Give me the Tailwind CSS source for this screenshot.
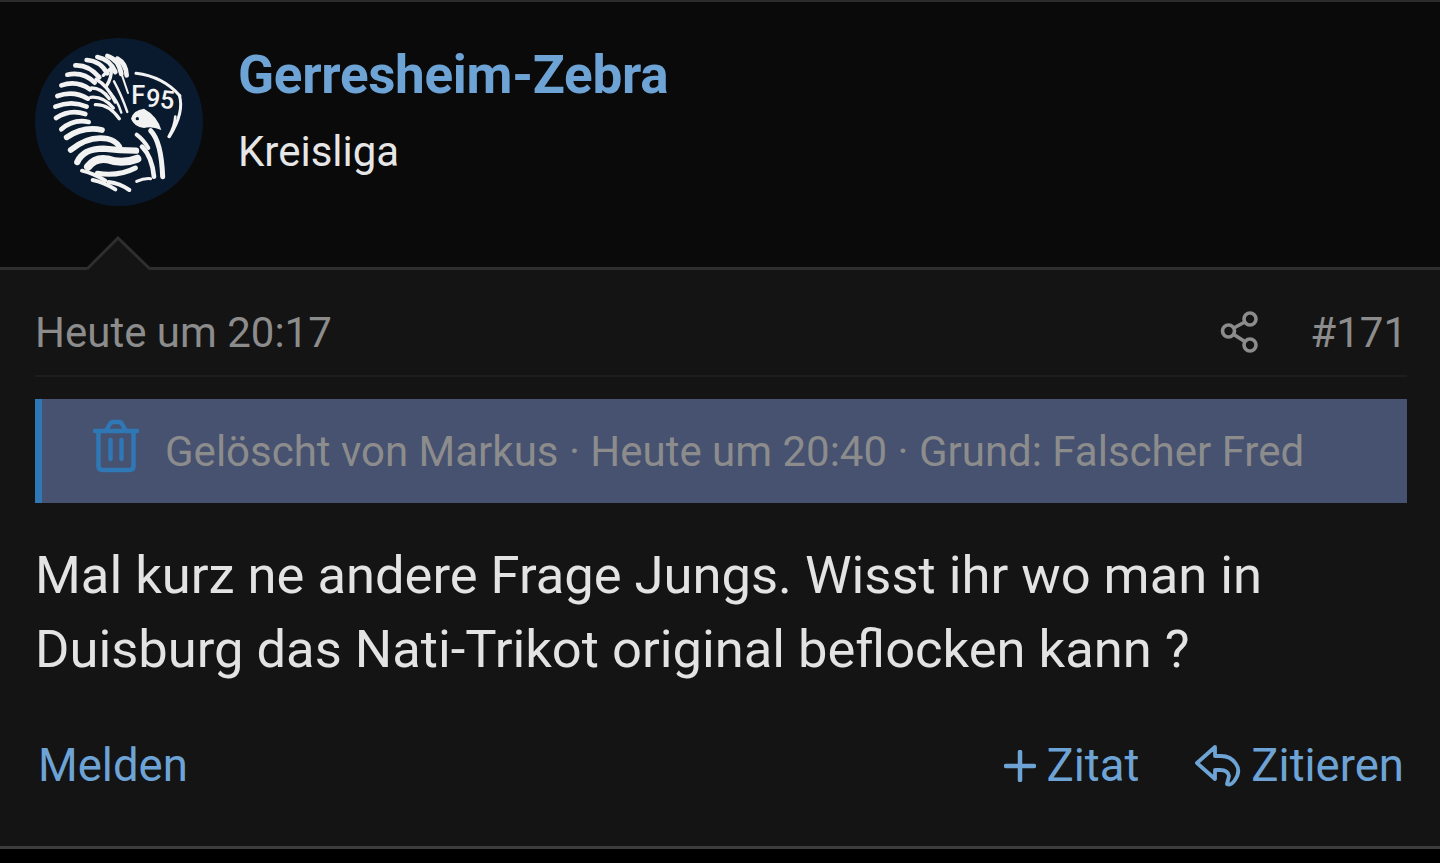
<!DOCTYPE html>
<html lang="de">
<head>
  <meta charset="UTF-8" />
  <title>Gerresheim-Zebra</title>
  <script src="https://cdn.jsdelivr.net/npm/@tailwindcss/browser@4"></script>
</head>
<body class="bg-black font-['Roboto',sans-serif] overflow-hidden">
  <div class="w-[1440px] h-[863px] flex flex-col">
    <!-- author header -->
    <header class="relative h-[270px] bg-[#0a0a0a] border-t-[2px] border-t-[#2c2c2c] border-b-[3px] border-b-[#2e2e2e] flex pl-[35px] pt-[36px] gap-[35px] shrink-0">
      <svg class="w-[168px] h-[168px] shrink-0" viewBox="45 40 504 504">
        <defs><filter id="soft"><feGaussianBlur stdDeviation="2" /></filter></defs>
        <circle cx="297" cy="292" r="252" fill="#0a1a2e" />
        <g fill="none" stroke="#f2f2f2" stroke-linecap="round" filter="url(#soft)">
          <!-- mane -->
          <g stroke-width="14">
            <path d="M200 106Q240 108 262 146" />
            <path d="M232 97Q270 104 286 142" />
            <path d="M262 94Q296 104 304 148" />
            <path d="M292 102Q318 116 320 152" />
            <path d="M166 122Q206 120 238 158" />
            <path d="M142 150Q190 140 224 174" />
            <path d="M124 182Q170 166 210 194" />
            <path d="M112 214Q160 196 204 222" />
            <path d="M106 246Q155 226 200 246" />
            <path d="M108 280Q150 252 196 268" />
            <path d="M124 314Q160 282 206 292" />
          </g>
          <!-- head -->
          <g stroke-width="10">
            <path d="M250 152Q262 140 274 130Q276 160 258 186" />
            <path d="M214 190Q245 190 268 222" />
            <path d="M228 164Q262 182 286 232" />
            <path d="M282 170Q304 210 322 262" stroke-width="7" />
            <path d="M270 204Q292 226 304 264" stroke-width="7" />
            <path d="M226 240Q266 238 298 282" />
            <path d="M212 218Q250 214 280 250" />
            <path d="M302 140L324 205" stroke-width="6" />
          </g>
          <!-- chest and bicep -->
          <g stroke-width="17">
            <path d="M140 338Q190 304 246 316" />
            <path d="M152 376Q205 332 262 342Q288 348 298 366" />
            <path d="M172 412Q190 372 250 372Q300 378 348 378" stroke-width="19" />
            <path d="M204 426Q226 398 262 404Q306 420 352 402" stroke-width="24" />
            <path d="M232 446Q296 456 346 430" stroke-width="15" />
          </g>
          <g stroke-width="12">
            <path d="M186 438Q220 446 256 468" />
            <path d="M218 466Q250 472 286 494" />
            <path d="M266 472Q300 476 328 496" />
            <path d="M392 318Q424 350 428 456" stroke-width="15" />
            <path d="M366 366Q396 396 402 456" stroke-width="14" />
            <path d="M350 330Q370 345 385 370" stroke-width="12" />
            <path d="M350 470Q372 460 392 462" stroke-width="9" />
            <!-- shield edge -->
            <path d="M348 146Q430 156 480 214" stroke-width="9" />
            <path d="M478 212Q494 262 448 336" stroke-width="9" />
            <path d="M466 276Q464 306 446 336" stroke-width="8" />
          </g>
        </g>
        <!-- fist -->
        <path d="M333 282Q340 256 372 252Q412 274 424 316Q395 304 372 310Q342 306 333 282Z" fill="#f2f2f2" filter="url(#soft)" />
        <circle cx="352" cy="282" r="5" fill="#0a1a2e" />
        <text x="334" y="238" fill="#f2f2f2" font-family="Roboto, sans-serif" font-weight="500" font-size="76">F</text>
        <text transform="rotate(6 375 245)" x="375" y="245" fill="#f2f2f2" font-family="Roboto, sans-serif" font-weight="500" font-size="76">95</text>
      </svg>
      <div class="flex flex-col pt-[7px]">
        <h1 class="text-[53px] leading-[60px] font-bold text-[#6ea3d6] tracking-[-0.3px]">Gerresheim-Zebra</h1>
        <p class="mt-[23px] text-[42px] leading-[48px] text-[#e6e6e6]">Kreisliga</p>
      </div>
      <!-- arrow -->
      <svg class="absolute left-[86px] top-[234px] w-[66px] h-[36px]" viewBox="0 0 66 36">
        <path d="M0 35L32 2L65 35Z" fill="#141414" />
        <path d="M1 33L32 2L64 33" fill="none" stroke="#2e2e2e" stroke-width="3" />
      </svg>
    </header>

    <!-- post -->
    <article class="h-[579px] bg-[#141414] border-b-[3px] border-b-[#3c3c3c] pl-[35px] pr-[33px] flex flex-col shrink-0">
      <div class="h-[107px] border-b-[2px] border-b-[#1e1e1e] flex items-center justify-between pt-[20px] text-[#8c8c8c] text-[42px]">
        <span>Heute um 20:17</span>
        <div class="flex items-center gap-[51px]">
          <svg class="w-[40px] h-[42px] mb-[2px]" viewBox="0 0 40 42" fill="none" stroke="#8c8c8c" stroke-width="3.600">
            <circle cx="31" cy="8" r="6" />
            <circle cx="9.500" cy="20" r="6" />
            <circle cx="31" cy="34" r="6" />
            <path d="M14.800 17L25.800 11M14.800 23.500L25.800 30.500" />
          </svg>
          <span>#171</span>
        </div>
      </div>

      <div class="mt-[22px] h-[104px] bg-[#475270] border-l-[7px] border-l-[#2f77b5] flex items-center pl-[50px] gap-[25px] text-[42px] text-[#8c8c8c]">
        <svg class="w-[48px] h-[56px] shrink-0 mb-[10px]" viewBox="0 0 48 56" fill="none" stroke="#2f77b5" stroke-width="4.500" stroke-linecap="round" stroke-linejoin="round">
          <path d="M3 13H45" />
          <path d="M6.500 13V48Q6.500 52 10.500 52H37.500Q41.500 52 41.500 48V13" />
          <path d="M14 13L18 6Q19 4 21 4H27Q29 4 30 6L34 13" />
          <path d="M18.500 22V41M29.500 22V41" />
        </svg>
        <span>Gelöscht von Markus · Heute um 20:40 · Grund: Falscher Fred</span>
      </div>

      <p class="mt-[35px] text-[52.500px] leading-[74px] text-[#e3e3e3]">Mal kurz ne andere Frage Jungs. Wisst ihr wo man in<br />Duisburg das Nati-Trikot original beflocken kann ?</p>

      <div class="mt-[52px] flex items-center justify-between text-[45.500px] leading-[56px] text-[#6ea3d6] pl-[3px] pr-[3px]">
        <span>Melden</span>
        <div class="flex items-center gap-[56px]">
          <span class="flex items-center gap-[10px]">
            <svg class="w-[32px] h-[32px]" viewBox="0 0 32 32" fill="none" stroke="#6ea3d6" stroke-width="4.500" stroke-linecap="round"><path d="M2 16H30M16 2V30" /></svg>
            Zitat
          </span>
          <span class="flex items-center gap-[10px]">
            <svg class="w-[46px] h-[42px]" viewBox="0 0 46 42" fill="none" stroke="#6ea3d6" stroke-width="3.800" stroke-linejoin="round" stroke-linecap="round">
              <path d="M20 2L2 18L20 34V25H25Q33 25 34 31L32 39Q36 41 40 35Q46 26 41 19Q36 11 26 11H20Z" />
            </svg>
            Zitieren
          </span>
        </div>
      </div>
    </article>
  </div>
</body>
</html>
